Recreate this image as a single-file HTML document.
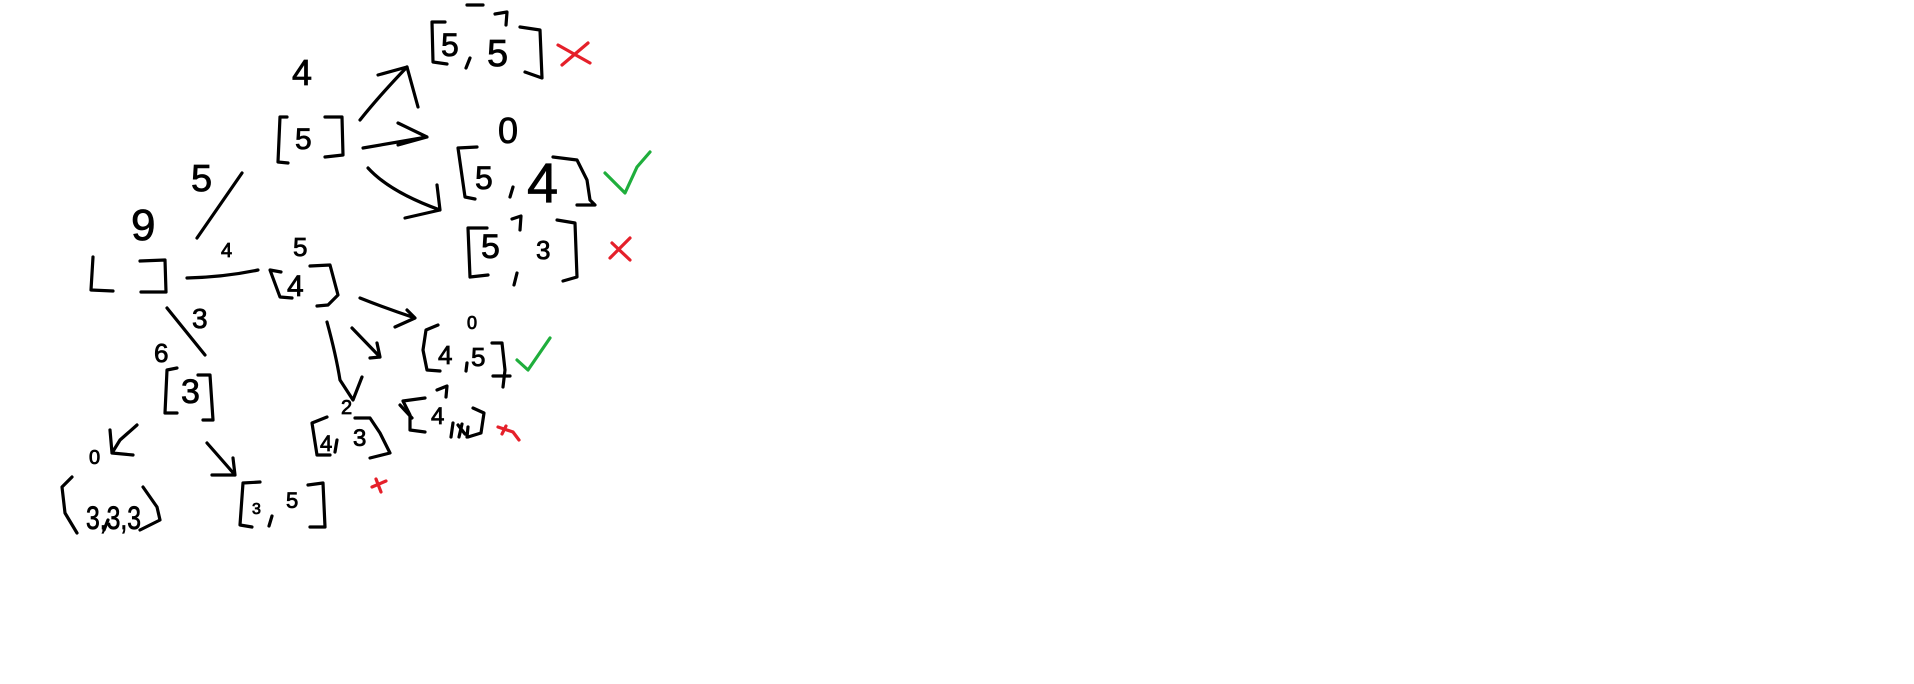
<!DOCTYPE html>
<html><head><meta charset="utf-8"><style>
html,body{margin:0;padding:0;background:#fff;width:1914px;height:684px;overflow:hidden}
svg{display:block}
text{font-family:"Liberation Sans",sans-serif;fill:#000;stroke:#000;stroke-width:0.8}
</style></head><body>
<svg width="1914" height="684" viewBox="0 0 1914 684" xmlns="http://www.w3.org/2000/svg">
<g fill="none" stroke="#000" stroke-width="3.2" stroke-linecap="round" stroke-linejoin="round">
<path d="M445 22 L432 22 L433 62 L447 64"/>
<path d="M470 58 L466 68"/>
<path d="M520 27 L540 30 L542 78 L525 72"/>
<path d="M467 5 L483 5"/>
<path d="M495 14 L507 12 L506 25"/>
<path d="M287 117 L280 117 L278 162 L288 163"/>
<path d="M325 117 L342 117 L343 155 L325 157"/>
<path d="M360 120 Q380 95 407 67 L418 107"/>
<path d="M378 75 L407 67"/>
<path d="M363 148 L427 137 L398 123 M427 137 L398 145"/>
<path d="M368 168 Q390 192 440 210 L437 185 M440 210 L405 218"/>
<path d="M477 147 L458 148 L465 197 L475 199"/>
<path d="M513 187 L510 197"/>
<path d="M553 157 L577 160 L587 180 L590 200 L595 205 L577 205"/>
<path d="M487 228 L468 228 L470 277 L488 275"/>
<path d="M512 219 L521 216 L520 230"/>
<path d="M517 273 L514 285"/>
<path d="M557 220 L575 223 L577 277 L563 281"/>
<path d="M242 173 L197 238"/>
<path d="M93 257 L91 290 L113 291"/>
<path d="M140 261 L165 260 L166 292 L141 292"/>
<path d="M187 278 Q225 277 258 270"/>
<!-- [4] -->
<path d="M281 272 L270 270 L280 297 L292 298"/>
<path d="M310 266 L330 265 L338 295 L328 305 L317 306"/>
<path d="M360 298 Q385 308 415 318 L407 310 M415 318 L395 327"/>
<path d="M352 328 L380 357 L377 343 M380 357 L370 358"/>
<path d="M327 322 Q336 355 340 380 L353 400 L362 377"/>
<path d="M438 325 L426 330 L423 350 L427 370 L440 371"/>
<path d="M467 363 L466 371"/>
<path d="M492 343 L502 343 L505 370 L503 387 M493 376 L510 376"/>
<path d="M425 398 L403 401 L410 415 L410 430 L425 432"/>
<path d="M400 405 L412 418"/>
<path d="M437 390 L447 386 L446 397"/>
<path d="M473 408 L484 413 L481 433 L468 437"/>
<path d="M453 423 L451 437 M458 425 L465 434 M462 424 L459 437 M468 427 L467 437"/>
<path d="M167 308 L205 355"/>
<path d="M177 368 L167 370 L165 413 L177 413"/>
<path d="M198 375 L210 375 L213 420 L203 420"/>
<path d="M327 417 L312 423 L317 455 L330 455"/>
<path d="M337 440 L335 452"/>
<path d="M355 418 L370 418 L380 433 L390 453 L370 458"/>
<path d="M137 425 L120 440 L112 453 L133 455 M110 430 L112 453"/>
<path d="M72 477 L62 487 L65 513 L77 533"/>
<path d="M143 487 L157 507 L160 520 L140 530"/>
<path d="M108 520 L104 530"/>
<path d="M207 443 Q222 460 235 475 L233 458 M235 475 L212 475"/>
<path d="M260 482 L243 483 L240 525 L252 527"/>
<path d="M272 516 L269 526"/>
<path d="M308 485 L323 483 L325 527 L310 527"/>
</g>
<g fill="none" stroke="#e5202a" stroke-width="3.2" stroke-linecap="round">
<path d="M558 45 L590 63 M562 65 L588 43"/>
<path d="M612 243 L630 260 M610 258 L630 238"/>
<path d="M372 487 L386 481 M376 479 L381 492"/>
<path d="M498 427 L513 432 L519 440 M502 434 L506 426"/>
</g>
<g fill="none" stroke="#1fae3c" stroke-width="3.2" stroke-linecap="round" stroke-linejoin="round">
<path d="M605 173 L625 193 L637 167 L650 152"/>
<path d="M517 360 L528 370 L550 338"/>
</g>
<text x="441" y="56" font-size="32">5</text>
<text x="487" y="66" font-size="38">5</text>
<text x="292" y="85" font-size="36">4</text>
<text x="295" y="149" font-size="30">5</text>
<text x="498" y="143" font-size="36">0</text>
<text x="475" y="189" font-size="32">5</text>
<text x="527" y="202" font-size="56">4</text>
<text x="481" y="258" font-size="34">5</text>
<text x="536" y="259" font-size="26">3</text>
<text x="191" y="191" font-size="38">5</text>
<text x="131" y="240" font-size="44">9</text>
<text x="221" y="257" font-size="20">4</text>
<text x="293" y="256" font-size="26">5</text>
<text x="287" y="296" font-size="30">4</text>
<text x="467" y="329" font-size="18">0</text>
<text x="438" y="364" font-size="26">4</text>
<text x="471" y="366" font-size="26">5</text>
<text x="431" y="424" font-size="24">4</text>
<text x="192" y="328" font-size="28">3</text>
<text x="154" y="362" font-size="26">6</text>
<text x="181" y="403" font-size="34">3</text>
<text x="341" y="414" font-size="20">2</text>
<text x="320" y="451" font-size="22">4</text>
<text x="353" y="446" font-size="24">3</text>
<text x="89" y="464" font-size="20">0</text>
<text x="86" y="529" font-size="32" textLength="55" lengthAdjust="spacingAndGlyphs">3,3,3</text>
<text x="252" y="514" font-size="16">3</text>
<text x="286" y="508" font-size="22">5</text>
</svg>
</body></html>
